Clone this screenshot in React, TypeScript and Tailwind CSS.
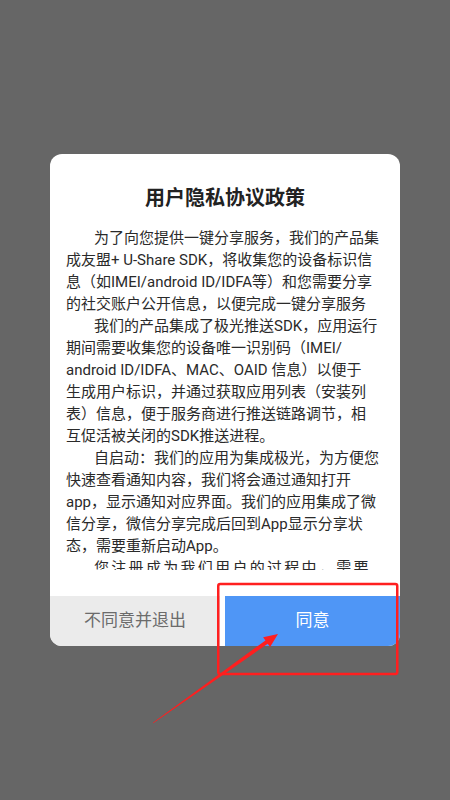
import React from 'react'

const paragraphs: React.ReactNode[] = [
  '为了向您提供一键分享服务，我们的产品集成友盟+ U-Share SDK，将收集您的设备标识信息（如IMEI/android ID/IDFA等）和您需要分享的社交账户公开信息，以便完成一键分享服务',
  <>
    我们的产品集成了极光推送SDK，应用运行期间需要收集您的设备唯一识别码（IMEI/
    <wbr />
    android ID/IDFA、MAC、OAID 信息）以便于
    <br />
    生成用户标识，并通过获取应用列表（安装列表）信息，便于服务商进行推送链路调节，相互促活被关闭的SDK推送进程。
  </>,
  '自启动：我们的应用为集成极光，为方便您快速查看通知内容，我们将会通过通知打开app，显示通知对应界面。我们的应用集成了微信分享，微信分享完成后回到App显示分享状态，需要重新启动App。',
  <>
    <span className="tracking-[2.3px]">您注册成为我们用户的过程中，需要</span>
    <br />
    提供您的手机号码，用于注册登录及身份验证。
  </>,
]

export default function App() {
  return (
    <div className="relative h-[800px] w-full bg-[#666666] flex items-center justify-center font-['Roboto','Noto_Sans_CJK_SC',sans-serif]">
      {/* Dialog */}
      <div className="w-[350px] bg-white rounded-[12px] overflow-hidden flex flex-col">
        <h2 className="pt-[30px] text-center text-[20px] leading-[28px] font-bold text-[#222222]">
          用户隐私协议政策
        </h2>
        <div className="mt-[15px] h-[343px] overflow-hidden pl-[16px]">
          <div className="w-[314px]">
            {paragraphs.map((p, i) => (
              <p key={i} className="text-[15px] leading-[22px] text-[#2a2a2a] indent-[28px]">
                {p}
              </p>
            ))}
          </div>
        </div>
        <div className="mt-[26px] flex h-[50px] gap-[5px]">
          <button className="w-[170px] bg-[#ebebeb] text-[17px] text-[#6b6b6b]">不同意并退出</button>
          <button className="flex-1 bg-[#4f96f6] text-[17px] text-white">同意</button>
        </div>
      </div>

      {/* Annotation overlay */}
      <svg className="absolute inset-0 pointer-events-none" width="450" height="800" viewBox="0 0 450 800">
        <rect x="218.25" y="584" width="179" height="90" rx="2" fill="none" stroke="#ff1f1f" strokeWidth="2.5" />
        <polygon
          fill="#ff1f1f"
          points="153.17,723.24 267.76,643.73 270.08,646.98 278,634 263.12,637.22 265.44,640.47 152.83,722.76"
        />
      </svg>
    </div>
  )
}
